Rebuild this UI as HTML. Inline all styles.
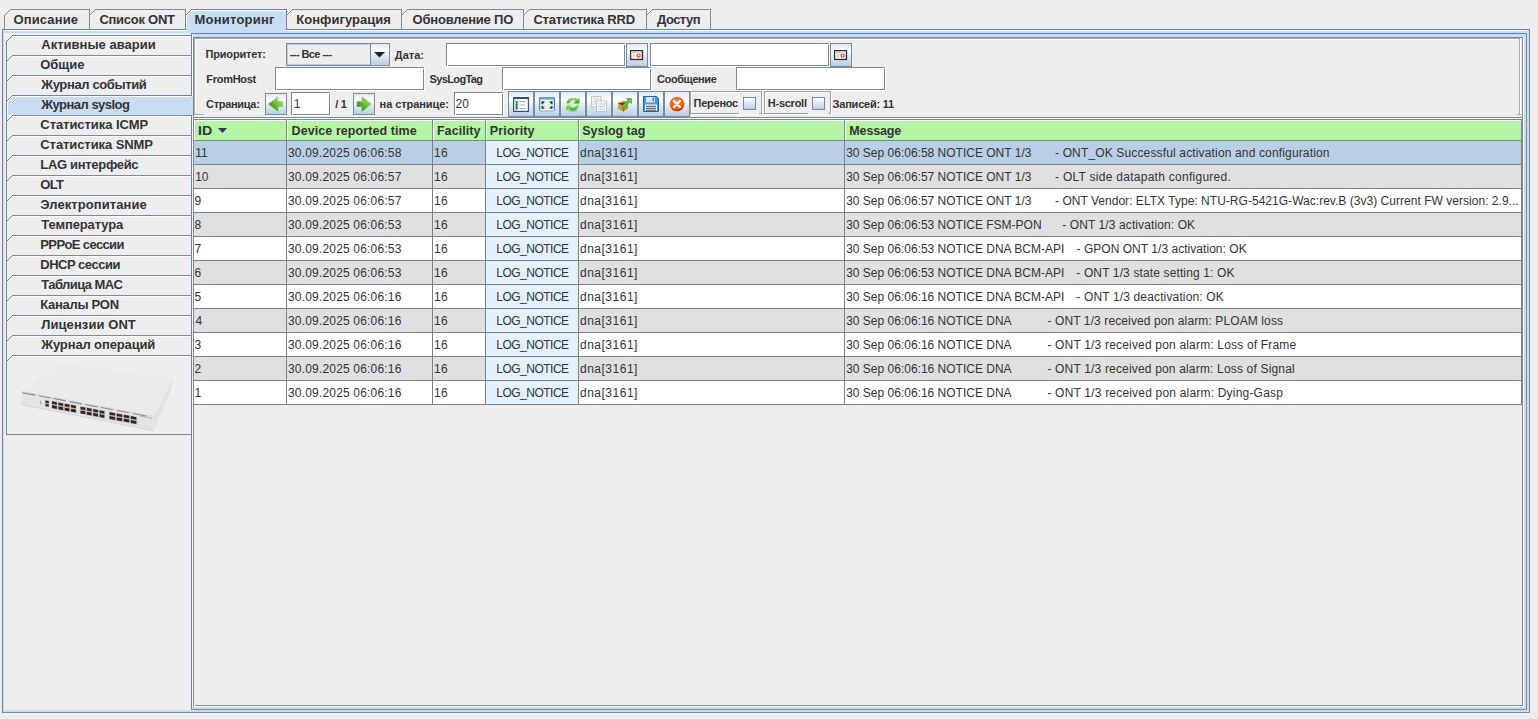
<!DOCTYPE html><html><head><meta charset='utf-8'><style>html,body{margin:0;padding:0}body{width:1538px;height:719px;position:relative;overflow:hidden;background:#eeeeee;font-family:"Liberation Sans",sans-serif}.t{position:absolute;line-height:20px;white-space:pre;color:#333}</style></head><body>
<svg width='1538' height='719' style='position:absolute;left:0;top:0' shape-rendering='crispEdges'><rect x='10' y='9' width='80' height='1' fill='#7a8a99'/><rect x='4' y='15' width='1' height='1' fill='#7a8a99'/><rect x='5' y='14' width='1' height='1' fill='#7a8a99'/><rect x='6' y='13' width='1' height='1' fill='#7a8a99'/><rect x='7' y='12' width='1' height='1' fill='#7a8a99'/><rect x='8' y='11' width='1' height='1' fill='#7a8a99'/><rect x='9' y='10' width='1' height='1' fill='#7a8a99'/><rect x='10' y='9' width='1' height='1' fill='#7a8a99'/><rect x='4' y='15' width='1' height='14' fill='#7a8a99'/><rect x='95' y='9' width='91' height='1' fill='#7a8a99'/><rect x='89' y='15' width='1' height='1' fill='#7a8a99'/><rect x='90' y='14' width='1' height='1' fill='#7a8a99'/><rect x='91' y='13' width='1' height='1' fill='#7a8a99'/><rect x='92' y='12' width='1' height='1' fill='#7a8a99'/><rect x='93' y='11' width='1' height='1' fill='#7a8a99'/><rect x='94' y='10' width='1' height='1' fill='#7a8a99'/><rect x='95' y='9' width='1' height='1' fill='#7a8a99'/><rect x='89' y='15' width='1' height='14' fill='#7a8a99'/><rect x='89' y='9' width='1' height='7' fill='#7a8a99'/><rect x='185' y='9' width='1' height='6' fill='#7a8a99'/><rect x='186' y='15' width='100' height='15' fill='#c8ddf2'/><rect x='191' y='10' width='95' height='1' fill='#c8ddf2'/><rect x='190' y='11' width='96' height='1' fill='#c8ddf2'/><rect x='189' y='12' width='97' height='1' fill='#c8ddf2'/><rect x='188' y='13' width='98' height='1' fill='#c8ddf2'/><rect x='187' y='14' width='99' height='1' fill='#c8ddf2'/><rect x='191' y='9' width='96' height='1' fill='#6382bf'/><rect x='185' y='15' width='1' height='1' fill='#6382bf'/><rect x='186' y='14' width='1' height='1' fill='#6382bf'/><rect x='187' y='13' width='1' height='1' fill='#6382bf'/><rect x='188' y='12' width='1' height='1' fill='#6382bf'/><rect x='189' y='11' width='1' height='1' fill='#6382bf'/><rect x='190' y='10' width='1' height='1' fill='#6382bf'/><rect x='191' y='9' width='1' height='1' fill='#6382bf'/><rect x='185' y='15' width='1' height='15' fill='#6382bf'/><rect x='286' y='9' width='1' height='21' fill='#6382bf'/><rect x='192' y='10' width='94' height='1' fill='#ffffff'/><rect x='186' y='15' width='1' height='1' fill='#ffffff'/><rect x='187' y='14' width='1' height='1' fill='#ffffff'/><rect x='188' y='13' width='1' height='1' fill='#ffffff'/><rect x='189' y='12' width='1' height='1' fill='#ffffff'/><rect x='190' y='11' width='1' height='1' fill='#ffffff'/><rect x='191' y='10' width='1' height='1' fill='#ffffff'/><rect x='186' y='15' width='1' height='15' fill='#ffffff'/><rect x='292' y='9' width='110' height='1' fill='#7a8a99'/><rect x='286' y='15' width='1' height='1' fill='#7a8a99'/><rect x='287' y='14' width='1' height='1' fill='#7a8a99'/><rect x='288' y='13' width='1' height='1' fill='#7a8a99'/><rect x='289' y='12' width='1' height='1' fill='#7a8a99'/><rect x='290' y='11' width='1' height='1' fill='#7a8a99'/><rect x='291' y='10' width='1' height='1' fill='#7a8a99'/><rect x='292' y='9' width='1' height='1' fill='#7a8a99'/><rect x='286' y='15' width='1' height='14' fill='#7a8a99'/><rect x='407' y='9' width='117' height='1' fill='#7a8a99'/><rect x='401' y='15' width='1' height='1' fill='#7a8a99'/><rect x='402' y='14' width='1' height='1' fill='#7a8a99'/><rect x='403' y='13' width='1' height='1' fill='#7a8a99'/><rect x='404' y='12' width='1' height='1' fill='#7a8a99'/><rect x='405' y='11' width='1' height='1' fill='#7a8a99'/><rect x='406' y='10' width='1' height='1' fill='#7a8a99'/><rect x='407' y='9' width='1' height='1' fill='#7a8a99'/><rect x='401' y='15' width='1' height='14' fill='#7a8a99'/><rect x='401' y='9' width='1' height='7' fill='#7a8a99'/><rect x='529' y='9' width='118' height='1' fill='#7a8a99'/><rect x='523' y='15' width='1' height='1' fill='#7a8a99'/><rect x='524' y='14' width='1' height='1' fill='#7a8a99'/><rect x='525' y='13' width='1' height='1' fill='#7a8a99'/><rect x='526' y='12' width='1' height='1' fill='#7a8a99'/><rect x='527' y='11' width='1' height='1' fill='#7a8a99'/><rect x='528' y='10' width='1' height='1' fill='#7a8a99'/><rect x='529' y='9' width='1' height='1' fill='#7a8a99'/><rect x='523' y='15' width='1' height='14' fill='#7a8a99'/><rect x='523' y='9' width='1' height='7' fill='#7a8a99'/><rect x='652' y='9' width='59' height='1' fill='#7a8a99'/><rect x='646' y='15' width='1' height='1' fill='#7a8a99'/><rect x='647' y='14' width='1' height='1' fill='#7a8a99'/><rect x='648' y='13' width='1' height='1' fill='#7a8a99'/><rect x='649' y='12' width='1' height='1' fill='#7a8a99'/><rect x='650' y='11' width='1' height='1' fill='#7a8a99'/><rect x='651' y='10' width='1' height='1' fill='#7a8a99'/><rect x='652' y='9' width='1' height='1' fill='#7a8a99'/><rect x='646' y='15' width='1' height='14' fill='#7a8a99'/><rect x='646' y='9' width='1' height='7' fill='#7a8a99'/><rect x='710' y='9' width='1' height='20' fill='#7a8a99'/><rect x='2' y='29' width='184' height='1' fill='#6382bf'/><rect x='286' y='29' width='1244' height='1' fill='#6382bf'/><rect x='186' y='29' width='100' height='2' fill='#c8ddf2'/><rect x='3' y='30' width='183' height='1' fill='#ffffff'/><rect x='287' y='30' width='1242' height='1' fill='#ffffff'/><rect x='3' y='31' width='1526' height='2' fill='#c8ddf2'/><rect x='3' y='30' width='1' height='681' fill='#c8ddf2'/><rect x='1527' y='30' width='2' height='681' fill='#c8ddf2'/><rect x='3' y='710' width='1526' height='2' fill='#c8ddf2'/><rect x='2' y='29' width='1' height='684' fill='#6382bf'/><rect x='2' y='712' width='1528' height='1' fill='#7a8a99'/><rect x='1529' y='29' width='1' height='684' fill='#7a8a99'/><rect x='12' y='35' width='179' height='1' fill='#7a8a99'/><rect x='6' y='41' width='1' height='1' fill='#7a8a99'/><rect x='7' y='40' width='1' height='1' fill='#7a8a99'/><rect x='8' y='39' width='1' height='1' fill='#7a8a99'/><rect x='9' y='38' width='1' height='1' fill='#7a8a99'/><rect x='10' y='37' width='1' height='1' fill='#7a8a99'/><rect x='11' y='36' width='1' height='1' fill='#7a8a99'/><rect x='12' y='35' width='1' height='1' fill='#7a8a99'/><rect x='6' y='41' width='1' height='21' fill='#7a8a99'/><rect x='13' y='36' width='178' height='1' fill='#ffffff'/><rect x='12' y='55' width='179' height='1' fill='#7a8a99'/><rect x='6' y='61' width='1' height='1' fill='#7a8a99'/><rect x='7' y='60' width='1' height='1' fill='#7a8a99'/><rect x='8' y='59' width='1' height='1' fill='#7a8a99'/><rect x='9' y='58' width='1' height='1' fill='#7a8a99'/><rect x='10' y='57' width='1' height='1' fill='#7a8a99'/><rect x='11' y='56' width='1' height='1' fill='#7a8a99'/><rect x='12' y='55' width='1' height='1' fill='#7a8a99'/><rect x='6' y='61' width='1' height='21' fill='#7a8a99'/><rect x='13' y='56' width='178' height='1' fill='#ffffff'/><rect x='12' y='75' width='179' height='1' fill='#7a8a99'/><rect x='6' y='81' width='1' height='1' fill='#7a8a99'/><rect x='7' y='80' width='1' height='1' fill='#7a8a99'/><rect x='8' y='79' width='1' height='1' fill='#7a8a99'/><rect x='9' y='78' width='1' height='1' fill='#7a8a99'/><rect x='10' y='77' width='1' height='1' fill='#7a8a99'/><rect x='11' y='76' width='1' height='1' fill='#7a8a99'/><rect x='12' y='75' width='1' height='1' fill='#7a8a99'/><rect x='6' y='81' width='1' height='21' fill='#7a8a99'/><rect x='13' y='76' width='178' height='1' fill='#ffffff'/><rect x='7' y='101' width='185' height='14' fill='#c8ddf2'/><rect x='12' y='96' width='180' height='1' fill='#c8ddf2'/><rect x='11' y='97' width='181' height='1' fill='#c8ddf2'/><rect x='10' y='98' width='182' height='1' fill='#c8ddf2'/><rect x='9' y='99' width='183' height='1' fill='#c8ddf2'/><rect x='8' y='100' width='184' height='1' fill='#c8ddf2'/><rect x='12' y='95' width='180' height='1' fill='#6382bf'/><rect x='6' y='101' width='1' height='1' fill='#6382bf'/><rect x='7' y='100' width='1' height='1' fill='#6382bf'/><rect x='8' y='99' width='1' height='1' fill='#6382bf'/><rect x='9' y='98' width='1' height='1' fill='#6382bf'/><rect x='10' y='97' width='1' height='1' fill='#6382bf'/><rect x='11' y='96' width='1' height='1' fill='#6382bf'/><rect x='12' y='95' width='1' height='1' fill='#6382bf'/><rect x='6' y='101' width='1' height='21' fill='#6382bf'/><rect x='13' y='96' width='179' height='1' fill='#ffffff'/><rect x='7' y='101' width='1' height='1' fill='#ffffff'/><rect x='8' y='100' width='1' height='1' fill='#ffffff'/><rect x='9' y='99' width='1' height='1' fill='#ffffff'/><rect x='10' y='98' width='1' height='1' fill='#ffffff'/><rect x='11' y='97' width='1' height='1' fill='#ffffff'/><rect x='12' y='96' width='1' height='1' fill='#ffffff'/><rect x='7' y='101' width='1' height='14' fill='#ffffff'/><rect x='12' y='115' width='179' height='1' fill='#7a8a99'/><rect x='6' y='121' width='1' height='1' fill='#7a8a99'/><rect x='7' y='120' width='1' height='1' fill='#7a8a99'/><rect x='8' y='119' width='1' height='1' fill='#7a8a99'/><rect x='9' y='118' width='1' height='1' fill='#7a8a99'/><rect x='10' y='117' width='1' height='1' fill='#7a8a99'/><rect x='11' y='116' width='1' height='1' fill='#7a8a99'/><rect x='12' y='115' width='1' height='1' fill='#7a8a99'/><rect x='6' y='122' width='1' height='20' fill='#7a8a99'/><rect x='13' y='116' width='178' height='1' fill='#ffffff'/><rect x='12' y='135' width='179' height='1' fill='#7a8a99'/><rect x='6' y='141' width='1' height='1' fill='#7a8a99'/><rect x='7' y='140' width='1' height='1' fill='#7a8a99'/><rect x='8' y='139' width='1' height='1' fill='#7a8a99'/><rect x='9' y='138' width='1' height='1' fill='#7a8a99'/><rect x='10' y='137' width='1' height='1' fill='#7a8a99'/><rect x='11' y='136' width='1' height='1' fill='#7a8a99'/><rect x='12' y='135' width='1' height='1' fill='#7a8a99'/><rect x='6' y='141' width='1' height='21' fill='#7a8a99'/><rect x='13' y='136' width='178' height='1' fill='#ffffff'/><rect x='12' y='155' width='179' height='1' fill='#7a8a99'/><rect x='6' y='161' width='1' height='1' fill='#7a8a99'/><rect x='7' y='160' width='1' height='1' fill='#7a8a99'/><rect x='8' y='159' width='1' height='1' fill='#7a8a99'/><rect x='9' y='158' width='1' height='1' fill='#7a8a99'/><rect x='10' y='157' width='1' height='1' fill='#7a8a99'/><rect x='11' y='156' width='1' height='1' fill='#7a8a99'/><rect x='12' y='155' width='1' height='1' fill='#7a8a99'/><rect x='6' y='161' width='1' height='21' fill='#7a8a99'/><rect x='13' y='156' width='178' height='1' fill='#ffffff'/><rect x='12' y='175' width='179' height='1' fill='#7a8a99'/><rect x='6' y='181' width='1' height='1' fill='#7a8a99'/><rect x='7' y='180' width='1' height='1' fill='#7a8a99'/><rect x='8' y='179' width='1' height='1' fill='#7a8a99'/><rect x='9' y='178' width='1' height='1' fill='#7a8a99'/><rect x='10' y='177' width='1' height='1' fill='#7a8a99'/><rect x='11' y='176' width='1' height='1' fill='#7a8a99'/><rect x='12' y='175' width='1' height='1' fill='#7a8a99'/><rect x='6' y='181' width='1' height='21' fill='#7a8a99'/><rect x='13' y='176' width='178' height='1' fill='#ffffff'/><rect x='12' y='195' width='179' height='1' fill='#7a8a99'/><rect x='6' y='201' width='1' height='1' fill='#7a8a99'/><rect x='7' y='200' width='1' height='1' fill='#7a8a99'/><rect x='8' y='199' width='1' height='1' fill='#7a8a99'/><rect x='9' y='198' width='1' height='1' fill='#7a8a99'/><rect x='10' y='197' width='1' height='1' fill='#7a8a99'/><rect x='11' y='196' width='1' height='1' fill='#7a8a99'/><rect x='12' y='195' width='1' height='1' fill='#7a8a99'/><rect x='6' y='201' width='1' height='21' fill='#7a8a99'/><rect x='13' y='196' width='178' height='1' fill='#ffffff'/><rect x='12' y='215' width='179' height='1' fill='#7a8a99'/><rect x='6' y='221' width='1' height='1' fill='#7a8a99'/><rect x='7' y='220' width='1' height='1' fill='#7a8a99'/><rect x='8' y='219' width='1' height='1' fill='#7a8a99'/><rect x='9' y='218' width='1' height='1' fill='#7a8a99'/><rect x='10' y='217' width='1' height='1' fill='#7a8a99'/><rect x='11' y='216' width='1' height='1' fill='#7a8a99'/><rect x='12' y='215' width='1' height='1' fill='#7a8a99'/><rect x='6' y='221' width='1' height='21' fill='#7a8a99'/><rect x='13' y='216' width='178' height='1' fill='#ffffff'/><rect x='12' y='235' width='179' height='1' fill='#7a8a99'/><rect x='6' y='241' width='1' height='1' fill='#7a8a99'/><rect x='7' y='240' width='1' height='1' fill='#7a8a99'/><rect x='8' y='239' width='1' height='1' fill='#7a8a99'/><rect x='9' y='238' width='1' height='1' fill='#7a8a99'/><rect x='10' y='237' width='1' height='1' fill='#7a8a99'/><rect x='11' y='236' width='1' height='1' fill='#7a8a99'/><rect x='12' y='235' width='1' height='1' fill='#7a8a99'/><rect x='6' y='241' width='1' height='21' fill='#7a8a99'/><rect x='13' y='236' width='178' height='1' fill='#ffffff'/><rect x='12' y='255' width='179' height='1' fill='#7a8a99'/><rect x='6' y='261' width='1' height='1' fill='#7a8a99'/><rect x='7' y='260' width='1' height='1' fill='#7a8a99'/><rect x='8' y='259' width='1' height='1' fill='#7a8a99'/><rect x='9' y='258' width='1' height='1' fill='#7a8a99'/><rect x='10' y='257' width='1' height='1' fill='#7a8a99'/><rect x='11' y='256' width='1' height='1' fill='#7a8a99'/><rect x='12' y='255' width='1' height='1' fill='#7a8a99'/><rect x='6' y='261' width='1' height='21' fill='#7a8a99'/><rect x='13' y='256' width='178' height='1' fill='#ffffff'/><rect x='12' y='275' width='179' height='1' fill='#7a8a99'/><rect x='6' y='281' width='1' height='1' fill='#7a8a99'/><rect x='7' y='280' width='1' height='1' fill='#7a8a99'/><rect x='8' y='279' width='1' height='1' fill='#7a8a99'/><rect x='9' y='278' width='1' height='1' fill='#7a8a99'/><rect x='10' y='277' width='1' height='1' fill='#7a8a99'/><rect x='11' y='276' width='1' height='1' fill='#7a8a99'/><rect x='12' y='275' width='1' height='1' fill='#7a8a99'/><rect x='6' y='281' width='1' height='21' fill='#7a8a99'/><rect x='13' y='276' width='178' height='1' fill='#ffffff'/><rect x='12' y='295' width='179' height='1' fill='#7a8a99'/><rect x='6' y='301' width='1' height='1' fill='#7a8a99'/><rect x='7' y='300' width='1' height='1' fill='#7a8a99'/><rect x='8' y='299' width='1' height='1' fill='#7a8a99'/><rect x='9' y='298' width='1' height='1' fill='#7a8a99'/><rect x='10' y='297' width='1' height='1' fill='#7a8a99'/><rect x='11' y='296' width='1' height='1' fill='#7a8a99'/><rect x='12' y='295' width='1' height='1' fill='#7a8a99'/><rect x='6' y='301' width='1' height='21' fill='#7a8a99'/><rect x='13' y='296' width='178' height='1' fill='#ffffff'/><rect x='12' y='315' width='179' height='1' fill='#7a8a99'/><rect x='6' y='321' width='1' height='1' fill='#7a8a99'/><rect x='7' y='320' width='1' height='1' fill='#7a8a99'/><rect x='8' y='319' width='1' height='1' fill='#7a8a99'/><rect x='9' y='318' width='1' height='1' fill='#7a8a99'/><rect x='10' y='317' width='1' height='1' fill='#7a8a99'/><rect x='11' y='316' width='1' height='1' fill='#7a8a99'/><rect x='12' y='315' width='1' height='1' fill='#7a8a99'/><rect x='6' y='321' width='1' height='21' fill='#7a8a99'/><rect x='13' y='316' width='178' height='1' fill='#ffffff'/><rect x='12' y='335' width='179' height='1' fill='#7a8a99'/><rect x='6' y='341' width='1' height='1' fill='#7a8a99'/><rect x='7' y='340' width='1' height='1' fill='#7a8a99'/><rect x='8' y='339' width='1' height='1' fill='#7a8a99'/><rect x='9' y='338' width='1' height='1' fill='#7a8a99'/><rect x='10' y='337' width='1' height='1' fill='#7a8a99'/><rect x='11' y='336' width='1' height='1' fill='#7a8a99'/><rect x='12' y='335' width='1' height='1' fill='#7a8a99'/><rect x='6' y='341' width='1' height='21' fill='#7a8a99'/><rect x='13' y='336' width='178' height='1' fill='#ffffff'/><rect x='12' y='355' width='179' height='1' fill='#7a8a99'/><rect x='6' y='361' width='1' height='1' fill='#7a8a99'/><rect x='7' y='360' width='1' height='1' fill='#7a8a99'/><rect x='8' y='359' width='1' height='1' fill='#7a8a99'/><rect x='9' y='358' width='1' height='1' fill='#7a8a99'/><rect x='10' y='357' width='1' height='1' fill='#7a8a99'/><rect x='11' y='356' width='1' height='1' fill='#7a8a99'/><rect x='12' y='355' width='1' height='1' fill='#7a8a99'/><rect x='6' y='361' width='1' height='74' fill='#7a8a99'/><rect x='6' y='434' width='185' height='1' fill='#7a8a99'/><rect x='13' y='356' width='178' height='1' fill='#ffffff'/><rect x='191' y='33' width='1' height='63' fill='#6382bf'/><rect x='191' y='115' width='1' height='595' fill='#6382bf'/><rect x='191' y='33' width='1336' height='1' fill='#6382bf'/><rect x='192' y='34' width='1334' height='3' fill='#c8ddf2'/><rect x='192' y='34' width='1' height='61' fill='#ffffff'/><rect x='192' y='116' width='1' height='593' fill='#ffffff'/><rect x='191' y='96' width='2' height='19' fill='#c8ddf2'/><rect x='1523' y='34' width='3' height='675' fill='#c8ddf2'/><rect x='192' y='707' width='1334' height='2' fill='#c8ddf2'/><rect x='191' y='709' width='1336' height='1' fill='#7a8a99'/><rect x='1526' y='33' width='1' height='677' fill='#7a8a99'/><rect x='194' y='38' width='1328' height='667' fill='#eeeeee'/><rect x='193' y='37' width='1330' height='1' fill='#7a8a99'/><rect x='193' y='37' width='1' height='669' fill='#7a8a99'/><rect x='1522' y='37' width='1' height='669' fill='#7a8a99'/><rect x='1523' y='37' width='1' height='670' fill='#ffffff'/><rect x='193' y='705' width='1330' height='1' fill='#7a8a99'/><rect x='193' y='706' width='1331' height='1' fill='#ffffff'/><rect x='194' y='705' width='1' height='1' fill='#ffffff'/><rect x='194' y='38' width='1326' height='1' fill='#aaaaaa'/><rect x='194' y='38' width='1' height='77' fill='#aaaaaa'/><rect x='195' y='39' width='1324' height='1' fill='#ffffff'/><rect x='195' y='39' width='1' height='75' fill='#ffffff'/><rect x='1519' y='38' width='1' height='77' fill='#aaaaaa'/><rect x='1520' y='38' width='1' height='78' fill='#ffffff'/><rect x='1517' y='114' width='3' height='1' fill='#aaaaaa'/><rect x='194' y='114' width='10' height='1' fill='#aaaaaa'/><rect x='194' y='115' width='11' height='1' fill='#ffffff'/><rect x='194' y='117' width='1328' height='1' fill='#7a8a99'/><rect x='194' y='118' width='1328' height='1' fill='#ffffff'/><rect x='194' y='119' width='1328' height='1' fill='#7a8a99'/><rect x='194' y='120' width='1328' height='1' fill='#ffffff'/><rect x='194' y='121' width='1328' height='19' fill='#b4f5a2'/><rect x='194' y='140' width='1328' height='1' fill='#7a8a99'/><rect x='194' y='120' width='1' height='20' fill='#ffffff'/><rect x='1521' y='119' width='1' height='22' fill='#7a8a99'/><rect x='286' y='119' width='1' height='22' fill='#7a8a99'/><rect x='287' y='120' width='1' height='20' fill='#ffffff'/><rect x='432' y='119' width='1' height='22' fill='#7a8a99'/><rect x='433' y='120' width='1' height='20' fill='#ffffff'/><rect x='485' y='119' width='1' height='22' fill='#7a8a99'/><rect x='486' y='120' width='1' height='20' fill='#ffffff'/><rect x='578' y='119' width='1' height='22' fill='#7a8a99'/><rect x='579' y='120' width='1' height='20' fill='#ffffff'/><rect x='844' y='119' width='1' height='22' fill='#7a8a99'/><rect x='845' y='120' width='1' height='20' fill='#ffffff'/><rect x='194' y='141' width='1328' height='23' fill='#b8cfe5'/><rect x='486' y='141' width='92' height='23' fill='#e2f1fa'/><rect x='194' y='164' width='1328' height='1' fill='#808080'/><rect x='286' y='141' width='1' height='24' fill='#808080'/><rect x='432' y='141' width='1' height='24' fill='#808080'/><rect x='485' y='141' width='1' height='24' fill='#808080'/><rect x='578' y='141' width='1' height='24' fill='#808080'/><rect x='844' y='141' width='1' height='24' fill='#808080'/><rect x='1521' y='141' width='1' height='24' fill='#808080'/><rect x='194' y='165' width='1328' height='23' fill='#e0e0e0'/><rect x='486' y='165' width='92' height='23' fill='#e2f1fa'/><rect x='194' y='188' width='1328' height='1' fill='#808080'/><rect x='286' y='165' width='1' height='24' fill='#808080'/><rect x='432' y='165' width='1' height='24' fill='#808080'/><rect x='485' y='165' width='1' height='24' fill='#808080'/><rect x='578' y='165' width='1' height='24' fill='#808080'/><rect x='844' y='165' width='1' height='24' fill='#808080'/><rect x='1521' y='165' width='1' height='24' fill='#808080'/><rect x='194' y='189' width='1328' height='23' fill='#ffffff'/><rect x='486' y='189' width='92' height='23' fill='#e2f1fa'/><rect x='194' y='212' width='1328' height='1' fill='#808080'/><rect x='286' y='189' width='1' height='24' fill='#808080'/><rect x='432' y='189' width='1' height='24' fill='#808080'/><rect x='485' y='189' width='1' height='24' fill='#808080'/><rect x='578' y='189' width='1' height='24' fill='#808080'/><rect x='844' y='189' width='1' height='24' fill='#808080'/><rect x='1521' y='189' width='1' height='24' fill='#808080'/><rect x='194' y='213' width='1328' height='23' fill='#e0e0e0'/><rect x='486' y='213' width='92' height='23' fill='#e2f1fa'/><rect x='194' y='236' width='1328' height='1' fill='#808080'/><rect x='286' y='213' width='1' height='24' fill='#808080'/><rect x='432' y='213' width='1' height='24' fill='#808080'/><rect x='485' y='213' width='1' height='24' fill='#808080'/><rect x='578' y='213' width='1' height='24' fill='#808080'/><rect x='844' y='213' width='1' height='24' fill='#808080'/><rect x='1521' y='213' width='1' height='24' fill='#808080'/><rect x='194' y='237' width='1328' height='23' fill='#ffffff'/><rect x='486' y='237' width='92' height='23' fill='#e2f1fa'/><rect x='194' y='260' width='1328' height='1' fill='#808080'/><rect x='286' y='237' width='1' height='24' fill='#808080'/><rect x='432' y='237' width='1' height='24' fill='#808080'/><rect x='485' y='237' width='1' height='24' fill='#808080'/><rect x='578' y='237' width='1' height='24' fill='#808080'/><rect x='844' y='237' width='1' height='24' fill='#808080'/><rect x='1521' y='237' width='1' height='24' fill='#808080'/><rect x='194' y='261' width='1328' height='23' fill='#e0e0e0'/><rect x='486' y='261' width='92' height='23' fill='#e2f1fa'/><rect x='194' y='284' width='1328' height='1' fill='#808080'/><rect x='286' y='261' width='1' height='24' fill='#808080'/><rect x='432' y='261' width='1' height='24' fill='#808080'/><rect x='485' y='261' width='1' height='24' fill='#808080'/><rect x='578' y='261' width='1' height='24' fill='#808080'/><rect x='844' y='261' width='1' height='24' fill='#808080'/><rect x='1521' y='261' width='1' height='24' fill='#808080'/><rect x='194' y='285' width='1328' height='23' fill='#ffffff'/><rect x='486' y='285' width='92' height='23' fill='#e2f1fa'/><rect x='194' y='308' width='1328' height='1' fill='#808080'/><rect x='286' y='285' width='1' height='24' fill='#808080'/><rect x='432' y='285' width='1' height='24' fill='#808080'/><rect x='485' y='285' width='1' height='24' fill='#808080'/><rect x='578' y='285' width='1' height='24' fill='#808080'/><rect x='844' y='285' width='1' height='24' fill='#808080'/><rect x='1521' y='285' width='1' height='24' fill='#808080'/><rect x='194' y='309' width='1328' height='23' fill='#e0e0e0'/><rect x='486' y='309' width='92' height='23' fill='#e2f1fa'/><rect x='194' y='332' width='1328' height='1' fill='#808080'/><rect x='286' y='309' width='1' height='24' fill='#808080'/><rect x='432' y='309' width='1' height='24' fill='#808080'/><rect x='485' y='309' width='1' height='24' fill='#808080'/><rect x='578' y='309' width='1' height='24' fill='#808080'/><rect x='844' y='309' width='1' height='24' fill='#808080'/><rect x='1521' y='309' width='1' height='24' fill='#808080'/><rect x='194' y='333' width='1328' height='23' fill='#ffffff'/><rect x='486' y='333' width='92' height='23' fill='#e2f1fa'/><rect x='194' y='356' width='1328' height='1' fill='#808080'/><rect x='286' y='333' width='1' height='24' fill='#808080'/><rect x='432' y='333' width='1' height='24' fill='#808080'/><rect x='485' y='333' width='1' height='24' fill='#808080'/><rect x='578' y='333' width='1' height='24' fill='#808080'/><rect x='844' y='333' width='1' height='24' fill='#808080'/><rect x='1521' y='333' width='1' height='24' fill='#808080'/><rect x='194' y='357' width='1328' height='23' fill='#e0e0e0'/><rect x='486' y='357' width='92' height='23' fill='#e2f1fa'/><rect x='194' y='380' width='1328' height='1' fill='#808080'/><rect x='286' y='357' width='1' height='24' fill='#808080'/><rect x='432' y='357' width='1' height='24' fill='#808080'/><rect x='485' y='357' width='1' height='24' fill='#808080'/><rect x='578' y='357' width='1' height='24' fill='#808080'/><rect x='844' y='357' width='1' height='24' fill='#808080'/><rect x='1521' y='357' width='1' height='24' fill='#808080'/><rect x='194' y='381' width='1328' height='23' fill='#ffffff'/><rect x='486' y='381' width='92' height='23' fill='#e2f1fa'/><rect x='194' y='404' width='1328' height='1' fill='#808080'/><rect x='286' y='381' width='1' height='24' fill='#808080'/><rect x='432' y='381' width='1' height='24' fill='#808080'/><rect x='485' y='381' width='1' height='24' fill='#808080'/><rect x='578' y='381' width='1' height='24' fill='#808080'/><rect x='844' y='381' width='1' height='24' fill='#808080'/><rect x='1521' y='381' width='1' height='24' fill='#808080'/><rect x='446' y='43' width='180' height='24' fill='#ffffff'/><rect x='446' y='43' width='179' height='1' fill='#7a8a99'/><rect x='446' y='43' width='1' height='23' fill='#7a8a99'/><rect x='624' y='43' width='1' height='23' fill='#7a8a99'/><rect x='446' y='65' width='179' height='1' fill='#7a8a99'/><rect x='447' y='65' width='1' height='1' fill='#ffffff'/><rect x='624' y='44' width='1' height='1' fill='#ffffff'/><rect x='650' y='43' width='180' height='24' fill='#ffffff'/><rect x='650' y='43' width='179' height='1' fill='#7a8a99'/><rect x='650' y='43' width='1' height='23' fill='#7a8a99'/><rect x='828' y='43' width='1' height='23' fill='#7a8a99'/><rect x='650' y='65' width='179' height='1' fill='#7a8a99'/><rect x='651' y='65' width='1' height='1' fill='#ffffff'/><rect x='828' y='44' width='1' height='1' fill='#ffffff'/><rect x='275' y='67' width='150' height='24' fill='#ffffff'/><rect x='275' y='67' width='149' height='1' fill='#7a8a99'/><rect x='275' y='67' width='1' height='23' fill='#7a8a99'/><rect x='423' y='67' width='1' height='23' fill='#7a8a99'/><rect x='275' y='89' width='149' height='1' fill='#7a8a99'/><rect x='276' y='89' width='1' height='1' fill='#ffffff'/><rect x='423' y='68' width='1' height='1' fill='#ffffff'/><rect x='502' y='67' width='150' height='24' fill='#ffffff'/><rect x='502' y='67' width='149' height='1' fill='#7a8a99'/><rect x='502' y='67' width='1' height='23' fill='#7a8a99'/><rect x='650' y='67' width='1' height='23' fill='#7a8a99'/><rect x='502' y='89' width='149' height='1' fill='#7a8a99'/><rect x='503' y='89' width='1' height='1' fill='#ffffff'/><rect x='650' y='68' width='1' height='1' fill='#ffffff'/><rect x='736' y='67' width='150' height='24' fill='#ffffff'/><rect x='736' y='67' width='149' height='1' fill='#7a8a99'/><rect x='736' y='67' width='1' height='23' fill='#7a8a99'/><rect x='884' y='67' width='1' height='23' fill='#7a8a99'/><rect x='736' y='89' width='149' height='1' fill='#7a8a99'/><rect x='737' y='89' width='1' height='1' fill='#ffffff'/><rect x='884' y='68' width='1' height='1' fill='#ffffff'/><rect x='291' y='92' width='40' height='24' fill='#ffffff'/><rect x='291' y='92' width='39' height='1' fill='#7a8a99'/><rect x='291' y='92' width='1' height='23' fill='#7a8a99'/><rect x='329' y='92' width='1' height='23' fill='#7a8a99'/><rect x='291' y='114' width='39' height='1' fill='#7a8a99'/><rect x='292' y='114' width='1' height='1' fill='#ffffff'/><rect x='329' y='93' width='1' height='1' fill='#ffffff'/><rect x='454' y='92' width='50' height='24' fill='#ffffff'/><rect x='454' y='92' width='49' height='1' fill='#7a8a99'/><rect x='454' y='92' width='1' height='23' fill='#7a8a99'/><rect x='502' y='92' width='1' height='23' fill='#7a8a99'/><rect x='454' y='114' width='49' height='1' fill='#7a8a99'/><rect x='455' y='114' width='1' height='1' fill='#ffffff'/><rect x='502' y='93' width='1' height='1' fill='#ffffff'/><rect x='690' y='91' width='72' height='1' fill='#a0a0a0'/><rect x='690' y='91' width='1' height='23' fill='#a0a0a0'/><rect x='761' y='91' width='1' height='23' fill='#a0a0a0'/><rect x='691' y='92' width='70' height='1' fill='#ffffff'/><rect x='691' y='92' width='1' height='21' fill='#ffffff'/><rect x='762' y='91' width='1' height='24' fill='#ffffff'/><rect x='690' y='113' width='49' height='1' fill='#a0a0a0'/><rect x='759' y='113' width='3' height='1' fill='#a0a0a0'/><rect x='691' y='114' width='72' height='1' fill='#ffffff'/><rect x='764' y='91' width='67' height='1' fill='#a0a0a0'/><rect x='764' y='91' width='1' height='23' fill='#a0a0a0'/><rect x='830' y='91' width='1' height='23' fill='#a0a0a0'/><rect x='765' y='92' width='65' height='1' fill='#ffffff'/><rect x='765' y='92' width='1' height='21' fill='#ffffff'/><rect x='831' y='91' width='1' height='24' fill='#ffffff'/><rect x='764' y='113' width='44' height='1' fill='#a0a0a0'/><rect x='828' y='113' width='3' height='1' fill='#a0a0a0'/><rect x='765' y='114' width='67' height='1' fill='#ffffff'/></svg>
<div style='position:absolute;left:286px;top:43px;width:102px;height:21px;border:1px solid #7a8a99;background:#eeeeee'><div style='position:absolute;left:0;top:0;width:82px;height:19px;border:1px solid #b8cfe5'></div><div style='position:absolute;left:83px;top:0;width:18px;height:21px;border-left:1px solid #7a8a99;background:linear-gradient(#dde8f3 0%,#ffffff 30%,#dde8f3 60%,#b8cfe5 100%)'></div></div>
<svg style='position:absolute;left:374px;top:52px' width='11' height='6'><path d='M0 0H11L5.5 5.5Z' fill='#222'/></svg>
<div style='position:absolute;left:626px;top:43px;width:20px;height:22px;border:1px solid #7a8a99;background:linear-gradient(#dde8f3 0%,#ffffff 30%,#dde8f3 60%,#b8cfe5 100%)'><svg width='18' height='16' style='position:absolute;left:2px;top:5px'><rect x='2' y='2' width='13' height='10' fill='#9a9a9a' opacity='0.35'/><rect x='1.6' y='1.6' width='11.8' height='8.8' fill='#fafafa' stroke='#2a2a2a' stroke-width='1.2'/><rect x='2.5' y='2.4' width='4.6' height='1.2' fill='#f2b431'/><rect x='7.6' y='2.4' width='5' height='1.2' fill='#a8cff2'/><rect x='3.6' y='4.2' width='2.2' height='5.4' fill='#dedede'/><circle cx='9.6' cy='6.6' r='1.6' fill='#fff' stroke='#e63c3c' stroke-width='1.2'/></svg></div>
<div style='position:absolute;left:830px;top:43px;width:20px;height:22px;border:1px solid #7a8a99;background:linear-gradient(#dde8f3 0%,#ffffff 30%,#dde8f3 60%,#b8cfe5 100%)'><svg width='18' height='16' style='position:absolute;left:2px;top:5px'><rect x='2' y='2' width='13' height='10' fill='#9a9a9a' opacity='0.35'/><rect x='1.6' y='1.6' width='11.8' height='8.8' fill='#fafafa' stroke='#2a2a2a' stroke-width='1.2'/><rect x='2.5' y='2.4' width='4.6' height='1.2' fill='#f2b431'/><rect x='7.6' y='2.4' width='5' height='1.2' fill='#a8cff2'/><rect x='3.6' y='4.2' width='2.2' height='5.4' fill='#dedede'/><circle cx='9.6' cy='6.6' r='1.6' fill='#fff' stroke='#e63c3c' stroke-width='1.2'/></svg></div>
<div style='position:absolute;left:265px;top:93px;width:20px;height:20px;border:1px solid #7a8a99;background:linear-gradient(#dde8f3 0%,#ffffff 30%,#dde8f3 60%,#b8cfe5 100%)'><svg width='20' height='20' style='position:absolute;left:0;top:0'><defs><linearGradient id='ga' x1='1' y1='0' x2='0' y2='1'><stop offset='0' stop-color='#c2f28a'/><stop offset='0.5' stop-color='#6cbf3a'/><stop offset='1' stop-color='#236e0e'/></linearGradient></defs><path d='M2.1 10L12.2 2.3V7.3H17.2V12.7H12.2V17.7Z' fill='url(#ga)'/></svg></div>
<div style='position:absolute;left:353px;top:93px;width:20px;height:20px;border:1px solid #7a8a99;background:linear-gradient(#dde8f3 0%,#ffffff 30%,#dde8f3 60%,#b8cfe5 100%)'><svg width='20' height='20' style='position:absolute;left:0;top:0'><defs><linearGradient id='gb' x1='1' y1='0' x2='0' y2='1'><stop offset='0' stop-color='#c2f28a'/><stop offset='0.5' stop-color='#6cbf3a'/><stop offset='1' stop-color='#236e0e'/></linearGradient></defs><path d='M17.9 10L7.8 2.3V7.3H2.8V12.7H7.8V17.7Z' fill='url(#gb)'/></svg></div>
<div style='position:absolute;left:508px;top:91px;width:24px;height:24px;border:1px solid #7a8a99;background:linear-gradient(#dde8f3 0%,#ffffff 30%,#dde8f3 60%,#b8cfe5 100%)'><div style='position:absolute;left:4px;top:5px;width:16px;height:16px'><svg width='16' height='16'><rect x='0.6' y='0.6' width='14.8' height='13.8' fill='#fff' stroke='#3b4a80' stroke-width='1.2'/><rect x='0' y='0' width='16' height='2' fill='#3b4a80'/><g stroke='#0c8a1a' stroke-width='1' fill='none'><path d='M2.3 3.6L3.6 5.3L4.9 3.6M2.3 6.6L3.6 8.3L4.9 6.6M2.3 9.6L3.6 11.3L4.9 9.6M3.6 5.3V12.5'/></g><g fill='#0c8a1a'><circle cx='3.6' cy='5.5' r='0.9'/><circle cx='3.6' cy='8.5' r='0.9'/><circle cx='3.6' cy='11.8' r='1'/></g><g stroke='#a4a4c0' stroke-width='1'><path d='M6.5 4.5H12.5M6.5 8H12.5M6.5 11.5H12.5'/></g></svg></div></div>
<div style='position:absolute;left:534px;top:91px;width:24px;height:24px;border:1px solid #7a8a99;background:linear-gradient(#dde8f3 0%,#ffffff 30%,#dde8f3 60%,#b8cfe5 100%)'><div style='position:absolute;left:4px;top:5px;width:16px;height:16px'><svg width='16' height='16'><rect x='0.6' y='0.6' width='14.8' height='13' rx='1' fill='#efefef' stroke='#3d86dd' stroke-width='1.2'/><rect x='0' y='0' width='16' height='2.6' rx='1' fill='#5aa0ea'/><rect x='1.2' y='12.2' width='13.6' height='1.4' fill='#fff'/><g stroke='#0a5e14' stroke-width='1.7' fill='none'><path d='M3.3 7.2V5.2H5.3M10.7 5.2H12.7V7.2M3.3 9V11H5.3M10.7 11H12.7V9'/></g></svg></div></div>
<div style='position:absolute;left:560px;top:91px;width:24px;height:24px;border:1px solid #7a8a99;background:linear-gradient(#dde8f3 0%,#ffffff 30%,#dde8f3 60%,#b8cfe5 100%)'><div style='position:absolute;left:4px;top:4px;width:16px;height:16px'><svg width='16' height='16'><defs><linearGradient id='gr' x1='0' y1='0' x2='0' y2='1'><stop offset='0' stop-color='#aef58a'/><stop offset='0.5' stop-color='#5cd43a'/><stop offset='1' stop-color='#2fa61c'/></linearGradient></defs><ellipse cx='8' cy='14.6' rx='5' ry='1.2' fill='#000' opacity='0.18'/><path d='M1.6 7.2C2 3.6 5 1.2 8.4 1.4C10.2 1.5 11.6 2.2 12.6 3.2L14.6 1V7.4H8.4L10.6 5.3C9.9 4.6 9.1 4.3 8.2 4.3C6.4 4.3 5 5.5 4.7 7.2Z' fill='url(#gr)'/><path d='M14.4 8.6C14 12.2 11 14.6 7.6 14.4C5.8 14.3 4.4 13.6 3.4 12.6L1.4 14.8V8.4H7.6L5.4 10.5C6.1 11.2 6.9 11.5 7.8 11.5C9.6 11.5 11 10.3 11.3 8.6Z' fill='url(#gr)'/></svg></div></div>
<div style='position:absolute;left:586px;top:91px;width:24px;height:24px;border:1px solid #7a8a99;background:linear-gradient(#dde8f3 0%,#ffffff 30%,#dde8f3 60%,#b8cfe5 100%)'><div style='position:absolute;left:4px;top:4px;width:16px;height:16px'><svg width='16' height='16'><rect x='0.5' y='0.5' width='9.5' height='10.5' fill='#f6f6f6' stroke='#c4c4c4'/><rect x='5.5' y='5' width='10' height='10.5' fill='#fbfbfb' stroke='#c4c4c4'/><g stroke='#c8c8c8' stroke-width='1'><path d='M2 3H8M2 5.5H5M2 8H5M7 8H14M7 10.5H14M7 13H14'/></g></svg></div></div>
<div style='position:absolute;left:612px;top:91px;width:24px;height:24px;border:1px solid #7a8a99;background:linear-gradient(#dde8f3 0%,#ffffff 30%,#dde8f3 60%,#b8cfe5 100%)'><div style='position:absolute;left:4px;top:4px;width:16px;height:16px'><svg width='16' height='16'><defs><linearGradient id='gbx' x1='0' y1='0' x2='1' y2='1'><stop offset='0' stop-color='#e8b45a'/><stop offset='1' stop-color='#b07a28'/></linearGradient></defs><path d='M1 7L6.5 4.5L11 6.5V12.5L6.5 15.5L1 13Z' fill='url(#gbx)'/><path d='M1 7L6.5 9.5L11 6.5' stroke='#7a4a10' stroke-width='0.8' fill='#5a3a10'/><path d='M6.5 9.5V15.5' stroke='#8a5a18' stroke-width='0.6'/><path d='M5 10L11 4L9.5 2.5H14.5V7.5L13 6L7 12Z' fill='#5cc43a' stroke='#3d9a26' stroke-width='0.6'/></svg></div></div>
<div style='position:absolute;left:638px;top:91px;width:24px;height:24px;border:1px solid #7a8a99;background:linear-gradient(#dde8f3 0%,#ffffff 30%,#dde8f3 60%,#b8cfe5 100%)'><div style='position:absolute;left:4px;top:4px;width:16px;height:16px'><svg width='16' height='16'><path d='M0.5 0.5H13.5L15.5 2.5V15.5H0.5Z' fill='#3b9de0' stroke='#1466b8' stroke-width='1'/><rect x='3' y='1' width='9' height='5.5' fill='#e6e6e6'/><rect x='9.5' y='1.6' width='1.6' height='3.8' fill='#2a7fd0'/><rect x='2' y='8.5' width='12' height='6.5' fill='#fbf8f5'/><g stroke='#3a2e3e' stroke-width='0.9'><path d='M3 10.3H13M3 12.3H13M3 14.2H13'/></g></svg></div></div>
<div style='position:absolute;left:664px;top:91px;width:24px;height:24px;border:1px solid #7a8a99;background:linear-gradient(#dde8f3 0%,#ffffff 30%,#dde8f3 60%,#b8cfe5 100%)'><div style='position:absolute;left:4px;top:4px;width:16px;height:16px'><svg width='16' height='16'><defs><radialGradient id='gc' cx='0.45' cy='0.35' r='0.65'><stop offset='0' stop-color='#ff8a2a'/><stop offset='0.75' stop-color='#f05a10'/><stop offset='1' stop-color='#c01808'/></radialGradient></defs><circle cx='8' cy='8' r='7.3' fill='url(#gc)'/><path d='M5 5L11 11M11 5L5 11' stroke='#fff' stroke-width='2.4' stroke-linecap='round'/></svg></div></div>
<svg style='position:absolute;left:218px;top:128px' width='10' height='6'><path d='M0 0H9L4.5 5Z' fill='#2a3a4e'/></svg>
<svg width='190' height='90' style='position:absolute;left:0;top:350px'><g transform='translate(0,-350)'><path d='M62 363.3L172.5 379.2L154.2 416.5L21.8 391.6Z' fill='#ebebeb'/><path d='M172.5 379.2L171 389.5L153.6 430.7L154.2 416.5Z' fill='#e2e2e2'/><path d='M21.8 391.6L154.2 416.5L153.6 430.7L21.2 404.6Z' fill='#e4e4e4'/><path d='M21.8 391.6L154.2 416.5' stroke='#d4d4d4' stroke-width='0.8'/><path d='M21.2 404.6L153.6 430.7' stroke='#c8c8c8' stroke-width='0.6'/><path d='M22.20 392.68L35.20 395.12' stroke='#8a8a8a' stroke-width='1.1'/><path d='M38.90 395.82L50.80 398.05' stroke='#8a8a8a' stroke-width='1.1'/><path d='M53.60 398.58L65.80 400.87' stroke='#8a8a8a' stroke-width='1.1'/><path d='M69.70 401.61L81.90 403.90' stroke='#8a8a8a' stroke-width='1.1'/><path d='M85.30 404.54L98.00 406.93' stroke='#8a8a8a' stroke-width='1.1'/><path d='M101.00 407.49L113.00 409.75' stroke='#8a8a8a' stroke-width='1.1'/><path d='M117.00 410.50L129.00 412.76' stroke='#8a8a8a' stroke-width='1.1'/><path d='M133.00 413.51L146.00 415.96' stroke='#8a8a8a' stroke-width='1.1'/><path d='M51.20 400.33L76.80 405.14V413.54L51.20 408.73Z' fill='#cfcfcf'/><path d='M52.00 401.28l4.85 0.91v3.0l-4.85 -0.91z' fill='#2e2622'/><path d='M52.00 405.08l4.85 0.91v3.0l-4.85 -0.91z' fill='#2e2622'/><path d='M52.00 404.28l4.85 0.91' stroke='#c9b6a4' stroke-width='0.8'/><path d='M58.35 402.47l4.85 0.91v3.0l-4.85 -0.91z' fill='#2e2622'/><path d='M58.35 406.27l4.85 0.91v3.0l-4.85 -0.91z' fill='#2e2622'/><path d='M58.35 405.47l4.85 0.91' stroke='#c9b6a4' stroke-width='0.8'/><path d='M64.70 403.67l4.85 0.91v3.0l-4.85 -0.91z' fill='#2e2622'/><path d='M64.70 407.47l4.85 0.91v3.0l-4.85 -0.91z' fill='#2e2622'/><path d='M64.70 406.67l4.85 0.91' stroke='#c9b6a4' stroke-width='0.8'/><path d='M71.05 404.86l4.85 0.91v3.0l-4.85 -0.91z' fill='#2e2622'/><path d='M71.05 408.66l4.85 0.91v3.0l-4.85 -0.91z' fill='#2e2622'/><path d='M71.05 407.86l4.85 0.91' stroke='#c9b6a4' stroke-width='0.8'/><path d='M79.70 405.69L105.30 410.50V418.90L79.70 414.09Z' fill='#cfcfcf'/><path d='M80.50 406.64l4.85 0.91v3.0l-4.85 -0.91z' fill='#2e2622'/><path d='M80.50 410.44l4.85 0.91v3.0l-4.85 -0.91z' fill='#2e2622'/><path d='M80.50 409.64l4.85 0.91' stroke='#c9b6a4' stroke-width='0.8'/><path d='M86.85 407.83l4.85 0.91v3.0l-4.85 -0.91z' fill='#2e2622'/><path d='M86.85 411.63l4.85 0.91v3.0l-4.85 -0.91z' fill='#2e2622'/><path d='M86.85 410.83l4.85 0.91' stroke='#c9b6a4' stroke-width='0.8'/><path d='M93.20 409.03l4.85 0.91v3.0l-4.85 -0.91z' fill='#2e2622'/><path d='M93.20 412.83l4.85 0.91v3.0l-4.85 -0.91z' fill='#2e2622'/><path d='M93.20 412.03l4.85 0.91' stroke='#c9b6a4' stroke-width='0.8'/><path d='M99.55 410.22l4.85 0.91v3.0l-4.85 -0.91z' fill='#2e2622'/><path d='M99.55 414.02l4.85 0.91v3.0l-4.85 -0.91z' fill='#2e2622'/><path d='M99.55 413.22l4.85 0.91' stroke='#c9b6a4' stroke-width='0.8'/><path d='M108.70 411.14L137.30 416.52V424.92L108.70 419.54Z' fill='#cfcfcf'/><path d='M109.50 412.09l5.60 1.05v3.0l-5.60 -1.05z' fill='#2e2622'/><path d='M109.50 415.89l5.60 1.05v3.0l-5.60 -1.05z' fill='#2e2622'/><path d='M109.50 415.09l5.60 1.05' stroke='#c9b6a4' stroke-width='0.8'/><path d='M116.60 413.43l5.60 1.05v3.0l-5.60 -1.05z' fill='#2e2622'/><path d='M116.60 417.23l5.60 1.05v3.0l-5.60 -1.05z' fill='#2e2622'/><path d='M116.60 416.43l5.60 1.05' stroke='#c9b6a4' stroke-width='0.8'/><path d='M123.70 414.76l5.60 1.05v3.0l-5.60 -1.05z' fill='#2e2622'/><path d='M123.70 418.56l5.60 1.05v3.0l-5.60 -1.05z' fill='#2e2622'/><path d='M123.70 417.76l5.60 1.05' stroke='#c9b6a4' stroke-width='0.8'/><path d='M130.80 416.10l5.60 1.05v3.0l-5.60 -1.05z' fill='#2e2622'/><path d='M130.80 419.90l5.60 1.05v3.0l-5.60 -1.05z' fill='#2e2622'/><path d='M130.80 419.10l5.60 1.05' stroke='#c9b6a4' stroke-width='0.8'/><path d='M45.20 400.20l3.8 0.71v2.7l-3.8 -0.71z' fill='#2a2a2a' stroke='#c8b090' stroke-width='0.5'/><path d='M45.20 403.60l3.8 0.71v2.7l-3.8 -0.71z' fill='#2a2a2a' stroke='#c8b090' stroke-width='0.5'/><path d='M40.50 400.62v4' stroke='#b8a890' stroke-width='1.2'/><path d='M140 416L152 418.3' stroke='#8a8a8a' stroke-width='0.6'/></g></svg>
<div style='position:absolute;left:743px;top:97px;width:11px;height:11px;border:1px solid #7a8a99;background:linear-gradient(#ffffff 0%,#b8cfe5 100%)'></div>
<div style='position:absolute;left:812px;top:97px;width:11px;height:11px;border:1px solid #7a8a99;background:linear-gradient(#ffffff 0%,#b8cfe5 100%)'></div>
<div class='t' style='left:13.40px;top:10px;font-size:13px;font-weight:bold;letter-spacing:0.143px'>Описание</div>
<div class='t' style='left:99.40px;top:10px;font-size:13px;font-weight:bold;letter-spacing:-0.267px'>Список ONT</div>
<div class='t' style='left:194.50px;top:10px;font-size:13px;font-weight:bold;letter-spacing:0.222px'>Мониторинг</div>
<div class='t' style='left:296.20px;top:10px;font-size:13px;font-weight:bold;letter-spacing:0.036px'>Конфигурация</div>
<div class='t' style='left:412.50px;top:10px;font-size:13px;font-weight:bold;letter-spacing:-0.200px'>Обновление ПО</div>
<div class='t' style='left:533.40px;top:10px;font-size:13px;font-weight:bold;letter-spacing:-0.215px'>Статистика RRD</div>
<div class='t' style='left:657.10px;top:10px;font-size:13px;font-weight:bold;letter-spacing:-0.560px'>Доступ</div>
<div class='t' style='left:41.30px;top:35px;font-size:13px;font-weight:bold;letter-spacing:0.014px'>Активные аварии</div>
<div class='t' style='left:40.30px;top:55px;font-size:13px;font-weight:bold;letter-spacing:-0.050px'>Общие</div>
<div class='t' style='left:41.30px;top:75px;font-size:13px;font-weight:bold;letter-spacing:-0.369px'>Журнал событий</div>
<div class='t' style='left:41.30px;top:95px;font-size:13px;font-weight:bold;letter-spacing:-0.517px'>Журнал syslog</div>
<div class='t' style='left:40.30px;top:115px;font-size:13px;font-weight:bold;letter-spacing:-0.057px'>Статистика ICMP</div>
<div class='t' style='left:40.30px;top:135px;font-size:13px;font-weight:bold;letter-spacing:-0.086px'>Статистика SNMP</div>
<div class='t' style='left:40.30px;top:155px;font-size:13px;font-weight:bold;letter-spacing:-0.317px'>LAG интерфейс</div>
<div class='t' style='left:40.30px;top:175px;font-size:13px;font-weight:bold;letter-spacing:-0.700px'>OLT</div>
<div class='t' style='left:40.30px;top:195px;font-size:13px;font-weight:bold;letter-spacing:0.077px'>Электропитание</div>
<div class='t' style='left:41.30px;top:215px;font-size:13px;font-weight:bold;letter-spacing:-0.120px'>Температура</div>
<div class='t' style='left:40.30px;top:235px;font-size:13px;font-weight:bold;letter-spacing:-0.618px'>PPPoE сессии</div>
<div class='t' style='left:40.30px;top:255px;font-size:13px;font-weight:bold;letter-spacing:-0.480px'>DHCP сессии</div>
<div class='t' style='left:41.30px;top:275px;font-size:13px;font-weight:bold;letter-spacing:-0.580px'>Таблица MAC</div>
<div class='t' style='left:40.30px;top:295px;font-size:13px;font-weight:bold;letter-spacing:-0.311px'>Каналы PON</div>
<div class='t' style='left:41.30px;top:315px;font-size:13px;font-weight:bold;letter-spacing:0.073px'>Лицензии ONT</div>
<div class='t' style='left:41.30px;top:335px;font-size:13px;font-weight:bold;letter-spacing:-0.129px'>Журнал операций</div>
<div class='t' style='left:195.20px;top:143px;font-size:12px;font-weight:normal;letter-spacing:0.000px'>11</div>
<div class='t' style='left:288.00px;top:143px;font-size:12px;font-weight:normal;letter-spacing:0.178px'>30.09.2025 06:06:58</div>
<div class='t' style='left:434.00px;top:143px;font-size:12px;font-weight:normal;letter-spacing:0.400px'>16</div>
<div class='t' style='left:496.30px;top:143px;font-size:12px;font-weight:normal;letter-spacing:-0.511px'>LOG_NOTICE</div>
<div class='t' style='left:580.00px;top:143px;font-size:12px;font-weight:normal;letter-spacing:0.500px'>dna[3161]</div>
<div class='t' style='left:846.20px;top:143px;font-size:12px;font-weight:normal;letter-spacing:0.000px'>30 Sep 06:06:58 NOTICE ONT 1/3</div>
<div class='t' style='left:1055.00px;top:143px;font-size:12px;font-weight:normal;letter-spacing:0.149px'>- ONT_OK Successful activation and configuration</div>
<div class='t' style='left:195.20px;top:167px;font-size:12px;font-weight:normal;letter-spacing:0.000px'>10</div>
<div class='t' style='left:288.00px;top:167px;font-size:12px;font-weight:normal;letter-spacing:0.178px'>30.09.2025 06:06:57</div>
<div class='t' style='left:434.00px;top:167px;font-size:12px;font-weight:normal;letter-spacing:0.400px'>16</div>
<div class='t' style='left:496.30px;top:167px;font-size:12px;font-weight:normal;letter-spacing:-0.511px'>LOG_NOTICE</div>
<div class='t' style='left:580.00px;top:167px;font-size:12px;font-weight:normal;letter-spacing:0.500px'>dna[3161]</div>
<div class='t' style='left:846.20px;top:167px;font-size:12px;font-weight:normal;letter-spacing:0.000px'>30 Sep 06:06:57 NOTICE ONT 1/3</div>
<div class='t' style='left:1055.00px;top:167px;font-size:12px;font-weight:normal;letter-spacing:0.273px'>- OLT side datapath configured.</div>
<div class='t' style='left:194.60px;top:191px;font-size:12px;font-weight:normal;letter-spacing:0.000px'>9</div>
<div class='t' style='left:288.00px;top:191px;font-size:12px;font-weight:normal;letter-spacing:0.178px'>30.09.2025 06:06:57</div>
<div class='t' style='left:434.00px;top:191px;font-size:12px;font-weight:normal;letter-spacing:0.400px'>16</div>
<div class='t' style='left:496.30px;top:191px;font-size:12px;font-weight:normal;letter-spacing:-0.511px'>LOG_NOTICE</div>
<div class='t' style='left:580.00px;top:191px;font-size:12px;font-weight:normal;letter-spacing:0.500px'>dna[3161]</div>
<div class='t' style='left:846.20px;top:191px;font-size:12px;font-weight:normal;letter-spacing:0.000px'>30 Sep 06:06:57 NOTICE ONT 1/3</div>
<div class='t' style='left:1055.00px;top:191px;font-size:12px;font-weight:normal;letter-spacing:0.028px'>- ONT Vendor: ELTX Type: NTU-RG-5421G-Wac:rev.B (3v3) Current FW version: 2.9...</div>
<div class='t' style='left:194.60px;top:215px;font-size:12px;font-weight:normal;letter-spacing:0.000px'>8</div>
<div class='t' style='left:288.00px;top:215px;font-size:12px;font-weight:normal;letter-spacing:0.178px'>30.09.2025 06:06:53</div>
<div class='t' style='left:434.00px;top:215px;font-size:12px;font-weight:normal;letter-spacing:0.400px'>16</div>
<div class='t' style='left:496.30px;top:215px;font-size:12px;font-weight:normal;letter-spacing:-0.511px'>LOG_NOTICE</div>
<div class='t' style='left:580.00px;top:215px;font-size:12px;font-weight:normal;letter-spacing:0.500px'>dna[3161]</div>
<div class='t' style='left:846.20px;top:215px;font-size:12px;font-weight:normal;letter-spacing:0.000px'>30 Sep 06:06:53 NOTICE FSM-PON</div>
<div class='t' style='left:1062.20px;top:215px;font-size:12px;font-weight:normal;letter-spacing:0.104px'>- ONT 1/3 activation: OK</div>
<div class='t' style='left:194.60px;top:239px;font-size:12px;font-weight:normal;letter-spacing:0.000px'>7</div>
<div class='t' style='left:288.00px;top:239px;font-size:12px;font-weight:normal;letter-spacing:0.178px'>30.09.2025 06:06:53</div>
<div class='t' style='left:434.00px;top:239px;font-size:12px;font-weight:normal;letter-spacing:0.400px'>16</div>
<div class='t' style='left:496.30px;top:239px;font-size:12px;font-weight:normal;letter-spacing:-0.511px'>LOG_NOTICE</div>
<div class='t' style='left:580.00px;top:239px;font-size:12px;font-weight:normal;letter-spacing:0.500px'>dna[3161]</div>
<div class='t' style='left:846.20px;top:239px;font-size:12px;font-weight:normal;letter-spacing:0.000px'>30 Sep 06:06:53 NOTICE DNA BCM-API</div>
<div class='t' style='left:1076.50px;top:239px;font-size:12px;font-weight:normal;letter-spacing:0.036px'>- GPON ONT 1/3 activation: OK</div>
<div class='t' style='left:194.60px;top:263px;font-size:12px;font-weight:normal;letter-spacing:0.000px'>6</div>
<div class='t' style='left:288.00px;top:263px;font-size:12px;font-weight:normal;letter-spacing:0.178px'>30.09.2025 06:06:53</div>
<div class='t' style='left:434.00px;top:263px;font-size:12px;font-weight:normal;letter-spacing:0.400px'>16</div>
<div class='t' style='left:496.30px;top:263px;font-size:12px;font-weight:normal;letter-spacing:-0.511px'>LOG_NOTICE</div>
<div class='t' style='left:580.00px;top:263px;font-size:12px;font-weight:normal;letter-spacing:0.500px'>dna[3161]</div>
<div class='t' style='left:846.20px;top:263px;font-size:12px;font-weight:normal;letter-spacing:0.000px'>30 Sep 06:06:53 NOTICE DNA BCM-API</div>
<div class='t' style='left:1076.30px;top:263px;font-size:12px;font-weight:normal;letter-spacing:0.129px'>- ONT 1/3 state setting 1: OK</div>
<div class='t' style='left:194.60px;top:287px;font-size:12px;font-weight:normal;letter-spacing:0.000px'>5</div>
<div class='t' style='left:288.00px;top:287px;font-size:12px;font-weight:normal;letter-spacing:0.178px'>30.09.2025 06:06:16</div>
<div class='t' style='left:434.00px;top:287px;font-size:12px;font-weight:normal;letter-spacing:0.400px'>16</div>
<div class='t' style='left:496.30px;top:287px;font-size:12px;font-weight:normal;letter-spacing:-0.511px'>LOG_NOTICE</div>
<div class='t' style='left:580.00px;top:287px;font-size:12px;font-weight:normal;letter-spacing:0.500px'>dna[3161]</div>
<div class='t' style='left:846.20px;top:287px;font-size:12px;font-weight:normal;letter-spacing:0.000px'>30 Sep 06:06:16 NOTICE DNA BCM-API</div>
<div class='t' style='left:1076.30px;top:287px;font-size:12px;font-weight:normal;letter-spacing:0.144px'>- ONT 1/3 deactivation: OK</div>
<div class='t' style='left:195.60px;top:311px;font-size:12px;font-weight:normal;letter-spacing:0.000px'>4</div>
<div class='t' style='left:288.00px;top:311px;font-size:12px;font-weight:normal;letter-spacing:0.178px'>30.09.2025 06:06:16</div>
<div class='t' style='left:434.00px;top:311px;font-size:12px;font-weight:normal;letter-spacing:0.400px'>16</div>
<div class='t' style='left:496.30px;top:311px;font-size:12px;font-weight:normal;letter-spacing:-0.511px'>LOG_NOTICE</div>
<div class='t' style='left:580.00px;top:311px;font-size:12px;font-weight:normal;letter-spacing:0.500px'>dna[3161]</div>
<div class='t' style='left:846.20px;top:311px;font-size:12px;font-weight:normal;letter-spacing:0.000px'>30 Sep 06:06:16 NOTICE DNA</div>
<div class='t' style='left:1047.40px;top:311px;font-size:12px;font-weight:normal;letter-spacing:0.113px'>- ONT 1/3 received pon alarm: PLOAM loss</div>
<div class='t' style='left:194.60px;top:335px;font-size:12px;font-weight:normal;letter-spacing:0.000px'>3</div>
<div class='t' style='left:288.00px;top:335px;font-size:12px;font-weight:normal;letter-spacing:0.178px'>30.09.2025 06:06:16</div>
<div class='t' style='left:434.00px;top:335px;font-size:12px;font-weight:normal;letter-spacing:0.400px'>16</div>
<div class='t' style='left:496.30px;top:335px;font-size:12px;font-weight:normal;letter-spacing:-0.511px'>LOG_NOTICE</div>
<div class='t' style='left:580.00px;top:335px;font-size:12px;font-weight:normal;letter-spacing:0.500px'>dna[3161]</div>
<div class='t' style='left:846.20px;top:335px;font-size:12px;font-weight:normal;letter-spacing:0.000px'>30 Sep 06:06:16 NOTICE DNA</div>
<div class='t' style='left:1047.40px;top:335px;font-size:12px;font-weight:normal;letter-spacing:0.181px'>- ONT 1/3 received pon alarm: Loss of Frame</div>
<div class='t' style='left:194.60px;top:359px;font-size:12px;font-weight:normal;letter-spacing:0.000px'>2</div>
<div class='t' style='left:288.00px;top:359px;font-size:12px;font-weight:normal;letter-spacing:0.178px'>30.09.2025 06:06:16</div>
<div class='t' style='left:434.00px;top:359px;font-size:12px;font-weight:normal;letter-spacing:0.400px'>16</div>
<div class='t' style='left:496.30px;top:359px;font-size:12px;font-weight:normal;letter-spacing:-0.511px'>LOG_NOTICE</div>
<div class='t' style='left:580.00px;top:359px;font-size:12px;font-weight:normal;letter-spacing:0.500px'>dna[3161]</div>
<div class='t' style='left:846.20px;top:359px;font-size:12px;font-weight:normal;letter-spacing:0.000px'>30 Sep 06:06:16 NOTICE DNA</div>
<div class='t' style='left:1047.40px;top:359px;font-size:12px;font-weight:normal;letter-spacing:0.172px'>- ONT 1/3 received pon alarm: Loss of Signal</div>
<div class='t' style='left:194.60px;top:383px;font-size:12px;font-weight:normal;letter-spacing:0.000px'>1</div>
<div class='t' style='left:288.00px;top:383px;font-size:12px;font-weight:normal;letter-spacing:0.178px'>30.09.2025 06:06:16</div>
<div class='t' style='left:434.00px;top:383px;font-size:12px;font-weight:normal;letter-spacing:0.400px'>16</div>
<div class='t' style='left:496.30px;top:383px;font-size:12px;font-weight:normal;letter-spacing:-0.511px'>LOG_NOTICE</div>
<div class='t' style='left:580.00px;top:383px;font-size:12px;font-weight:normal;letter-spacing:0.500px'>dna[3161]</div>
<div class='t' style='left:846.20px;top:383px;font-size:12px;font-weight:normal;letter-spacing:0.000px'>30 Sep 06:06:16 NOTICE DNA</div>
<div class='t' style='left:1047.40px;top:383px;font-size:12px;font-weight:normal;letter-spacing:0.195px'>- ONT 1/3 received pon alarm: Dying-Gasp</div>
<div class='t' style='left:197.80px;top:121px;font-size:12.5px;font-weight:bold;letter-spacing:0.000px;transform:scaleX(1.14);transform-origin:0 0'>ID</div>
<div class='t' style='left:291.60px;top:121px;font-size:12.5px;font-weight:bold;letter-spacing:0.074px'>Device reported time</div>
<div class='t' style='left:436.90px;top:121px;font-size:12.5px;font-weight:bold;letter-spacing:0.086px'>Facility</div>
<div class='t' style='left:489.80px;top:121px;font-size:12.5px;font-weight:bold;letter-spacing:0.143px'>Priority</div>
<div class='t' style='left:582.30px;top:121px;font-size:12.5px;font-weight:bold;letter-spacing:-0.022px'>Syslog tag</div>
<div class='t' style='left:849.30px;top:121px;font-size:12.5px;font-weight:bold;letter-spacing:-0.133px'>Message</div>
<div class='t' style='left:205.50px;top:44px;font-size:11px;font-weight:bold;letter-spacing:-0.178px'>Приоритет:</div>
<div class='t' style='left:394.80px;top:45px;font-size:11px;font-weight:bold;letter-spacing:0.000px'>Дата:</div>
<div class='t' style='left:206.30px;top:69px;font-size:11px;font-weight:bold;letter-spacing:-0.286px'>FromHost</div>
<div class='t' style='left:429.50px;top:69px;font-size:11px;font-weight:bold;letter-spacing:-0.625px'>SysLogTag</div>
<div class='t' style='left:657.10px;top:69px;font-size:11px;font-weight:bold;letter-spacing:-0.425px'>Сообщение</div>
<div class='t' style='left:206.00px;top:94px;font-size:11px;font-weight:bold;letter-spacing:-0.300px'>Страница:</div>
<div class='t' style='left:335.30px;top:94px;font-size:11px;font-weight:bold;letter-spacing:-0.300px'>/ 1</div>
<div class='t' style='left:379.60px;top:94px;font-size:11px;font-weight:bold;letter-spacing:-0.073px'>на странице:</div>
<div class='t' style='left:293.80px;top:94px;font-size:12px;font-weight:normal;letter-spacing:0.000px'>1</div>
<div class='t' style='left:455.50px;top:94px;font-size:12px;font-weight:normal;letter-spacing:0.000px'>20</div>
<div class='t' style='left:693.60px;top:93px;font-size:11px;font-weight:bold;letter-spacing:-0.267px'>Перенос</div>
<div class='t' style='left:767.80px;top:93px;font-size:11px;font-weight:bold;letter-spacing:-0.257px'>H-scroll</div>
<div class='t' style='left:832.60px;top:94px;font-size:11px;font-weight:bold;letter-spacing:-0.220px'>Записей: 11</div>
<div class='t' style='left:289.80px;top:44px;font-size:11px;font-weight:bold;letter-spacing:-0.600px'>--- Все ---</div>
</body></html>
